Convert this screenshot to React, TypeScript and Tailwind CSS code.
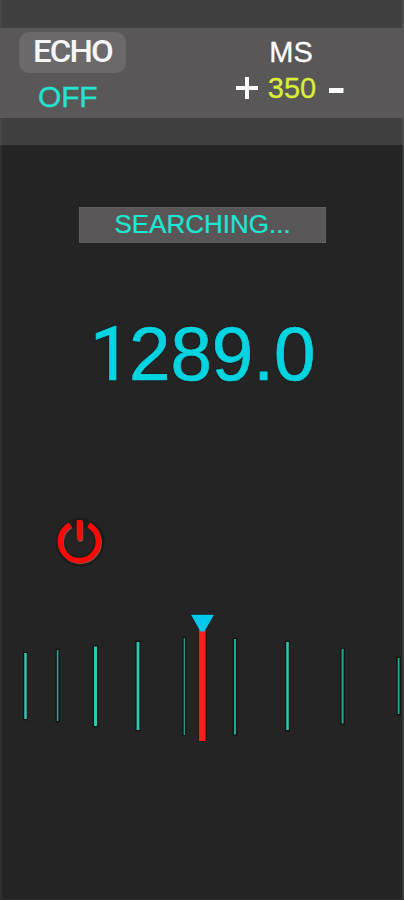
interface Tick {
  x: number;
  top: number;
  bottom: number;
  width: number;
  color: string;
}

const ticks: Tick[] = [
  { x: 25.5, top: 653, bottom: 719, width: 2.4, color: '#2bcdb6' },
  { x: 57.6, top: 650, bottom: 721, width: 1.6, color: '#27a592' },
  { x: 95.5, top: 646.5, bottom: 726, width: 3, color: '#2cc9b2' },
  { x: 138, top: 642, bottom: 730, width: 2.8, color: '#2ccbb4' },
  { x: 184.3, top: 638, bottom: 735, width: 1.3, color: '#2c9f8c' },
  { x: 235, top: 639, bottom: 734.5, width: 2, color: '#20a78f' },
  { x: 287.5, top: 642, bottom: 730, width: 2.6, color: '#2cc4ad' },
  { x: 342.6, top: 649, bottom: 723.5, width: 2, color: '#1fa890' },
  { x: 398.6, top: 658, bottom: 714, width: 1.8, color: '#1fa890' },
];

const ring = 'M70 524.9 A19 19 0 1 0 88.6 524.9';

function PowerIcon() {
  return (
    <svg className="block h-[60px] w-[60px]" viewBox="50 512 60 60" fill="none">
      <circle cx="80.3" cy="542.3" r="24.5" fill="#1d1c1c" />
      <circle cx="79.3" cy="541.5" r="15" fill="#242424" />
      <g stroke="#8c4a42" strokeWidth="5.4" transform="translate(1 1)">
        <path d={ring} />
        <path d="M79.5 522 V538.3" strokeLinecap="round" />
      </g>
      <g stroke="#fb0905" strokeWidth="5.4">
        <path d={ring} />
        <path d="M79.5 520 V530" />
        <path d="M79.5 523 V537.6" strokeLinecap="round" />
      </g>
    </svg>
  );
}

function Dial() {
  return (
    <svg className="block h-[140px] w-[404px]" viewBox="0 608 404 140">
      {ticks.map((t) => (
        <g key={t.x}>
          <rect x={t.x - t.width / 2 - 1.3} y={t.top - 1.3} width={t.width + 2.6} height={t.bottom - t.top + 2.6} fill="#0d0d0d" opacity="0.65" />
          <rect x={t.x - t.width / 2} y={t.top} width={t.width} height={t.bottom - t.top} fill={t.color} />
        </g>
      ))}
      <path d="M189.6 614 H215.4 L203 633.5 H201.5 Z" fill="#0d1517" opacity="0.6" />
      <rect x="198" y="632" width="9" height="109.5" fill="#101414" opacity="0.6" />
      <rect x="199" y="630" width="6.6" height="111" fill="#fc1d1b" />
      <path d="M191 614.8 H214 L204.4 631.4 H200.4 Z" fill="#02c8ee" />
    </svg>
  );
}

export default function App() {
  return (
    <main className="flex h-[900px] w-[404px] flex-col overflow-hidden border-b border-[#302a2d] bg-[#242424] font-['Liberation_Sans',Arial,sans-serif] shadow-[inset_2px_0_0_#303030,inset_-2px_0_0_#3a3b3b]">
      <header className="h-[145px] shrink-0 border-x-2 border-l-[#474747] border-r-[#505050] bg-[#404040] pt-7">
        <div className="-mx-0.5 flex h-[90px] bg-[#5a5758]">
          <div className="ml-[19px] flex w-[107px] flex-col pt-1">
            <button className="flex h-[41px] w-full items-center justify-center rounded-[10px] bg-[#6b696a] font-['Roboto',sans-serif] text-[30.5px] leading-none font-medium text-[#f6f6f6]">
              <span className="scale-x-[1.08] tracking-[-1.7px]">ECHO</span>
            </button>
            <span className="mt-[9px] pl-[19px] text-[30px] leading-[30px] tracking-[-0.2px] text-[#22e3d0] [-webkit-text-stroke:0.3px_#22e3d0]">OFF</span>
          </div>
          <div className="ml-[107px] flex w-[113px] flex-col items-center pt-[9px]">
            <span className="pl-[3px] text-[29px] leading-[30px] text-white [-webkit-text-stroke:0.3px_white]">MS</span>
            <div className="mt-1.5 flex h-[30px] items-center">
              <svg className="h-[30px] w-[24px]" viewBox="0 0 24 30">
                <path d="M1 15H23M12 4V26" stroke="#fbfbfb" strokeWidth="4" />
              </svg>
              <span className="ml-[9px] text-[29px] leading-[30px] text-[#d9ee36] [-webkit-text-stroke:0.3px_#d9ee36]">350</span>
              <svg className="ml-[12px] h-[30px] w-[16px]" viewBox="0 0 16 30">
                <path d="M1 17.5H15.5" stroke="#fbfbfb" strokeWidth="5" />
              </svg>
            </div>
          </div>
        </div>
      </header>

      <section className="mt-[62px] ml-[79px] flex h-9 w-[247px] shrink-0 justify-center border border-[#625f60] bg-[#595657] text-[26px] leading-[33px] text-[#1ce8d1]">
        <span className="[-webkit-text-stroke:0.2px_#1ce8d1]">SEARCHING...</span>
      </section>

      <p className="mt-[68px] ml-[90px] flex h-[86px] shrink-0 scale-y-[1.03] items-baseline text-[74.5px] leading-[86px] whitespace-nowrap text-[#00d4e0] [-webkit-text-stroke:0.7px_#00d4e0] [text-shadow:0_0_2px_#090909]">
        <span className="w-[39px] shrink-0 font-['Roboto',sans-serif] text-[73px]">1</span>
        <span>289.0</span>
      </p>

      <button className="mt-[115px] ml-[50px] h-[60px] w-[60px] shrink-0" aria-label="Power">
        <PowerIcon />
      </button>

      <div className="mt-9 shrink-0">
        <Dial />
      </div>
    </main>
  );
}
